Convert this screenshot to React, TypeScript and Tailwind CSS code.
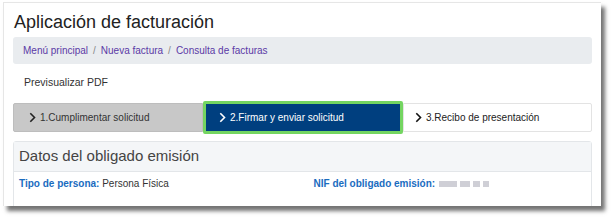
import React from 'react';

const Chevron = ({ color }: { color: string }) => (
  <svg width="7" height="11" viewBox="0 0 7 11" className="shrink-0">
    <path d="M1.3 1.3 L5.5 5.5 L1.3 9.7" fill="none" stroke={color} strokeWidth="1.6" />
  </svg>
);

export default function App() {
  return (
    <div className="w-[612px] h-[218px] bg-white pl-[3px] pt-[2px]" style={{ fontFamily: '"Liberation Sans", Arial, sans-serif' }}>
      <div className="w-[598px] h-[204px] bg-white border-t border-l border-[#e6e6e6] shadow-[4px_5px_4px_rgba(0,0,0,0.55)] overflow-hidden px-[9px]">
        <h1 className="text-[18px] leading-[24px] text-[#222] pt-[7px] pl-[1px]">Aplicación de facturación</h1>

        <div className="mt-[3px] h-[27px] bg-[#e9ecef] rounded-[3px] flex items-center pl-[10px] text-[10px] text-[#5b3aa6] gap-[5px]">
          <span>Menú principal</span>
          <span className="text-[#888]">/</span>
          <span>Nueva factura</span>
          <span className="text-[#888]">/</span>
          <span>Consulta de facturas</span>
        </div>

        <div className="h-[37px] flex items-center pl-[11px] text-[10.5px] text-[#333]">Previsualizar PDF</div>

        <div className="flex items-center h-[33px]">
          <div className="w-[190px] h-[29px] bg-[#c8c8c8] border border-[#bdbdbd] rounded-l-[2px] flex items-center gap-[4px] pl-[15px] text-[10px] text-[#333]">
            <Chevron color="#222" />
            <span>1.Cumplimentar solicitud</span>
          </div>
          <div className="w-[200px] h-[33px] bg-[#003f7f] border-[3px] border-[#74d561] rounded-[2px] flex items-center gap-[4px] pl-[13px] text-[10px] text-white">
            <Chevron color="#fff" />
            <span>2.Firmar y enviar solicitud</span>
          </div>
          <div className="flex-1 h-[29px] bg-white border border-[#e3e3e3] rounded-r-[2px] flex items-center gap-[4px] pl-[11px] text-[10px] text-[#222]">
            <Chevron color="#111" />
            <span>3.Recibo de presentación</span>
          </div>
        </div>

        <div className="mt-[7px] border border-[#e3e6e9] rounded-t-[3px]">
          <div className="h-[30px] bg-[#f4f6f8] border-b border-[#e3e6e9] flex items-center pl-[5px] text-[15px] text-[#444]">
            Datos del obligado emisión
          </div>
          <div className="grid grid-cols-2 pt-[4px] pb-[20px] text-[10px]">
            <div className="pl-[5px]">
              <span className="font-bold text-[#1a6cbf]">Tipo de persona:</span>{' '}
              <span className="text-[#333]">Persona Física</span>
            </div>
            <div className="pl-[11px] flex items-center gap-[4px]">
              <span className="font-bold text-[#1a6cbf]">NIF del obligado emisión:</span>
              <span className="flex gap-[3px] items-center blur-[0.7px]">
                <span className="w-[18px] h-[6px] bg-[#cfcfd6]" />
                <span className="w-[10px] h-[6px] bg-[#cfcfd6]" />
                <span className="w-[7px] h-[6px] bg-[#cfcfd6]" />
                <span className="w-[6px] h-[6px] bg-[#cfcfd6]" />
              </span>
            </div>
          </div>
        </div>
      </div>
    </div>
  );
}
